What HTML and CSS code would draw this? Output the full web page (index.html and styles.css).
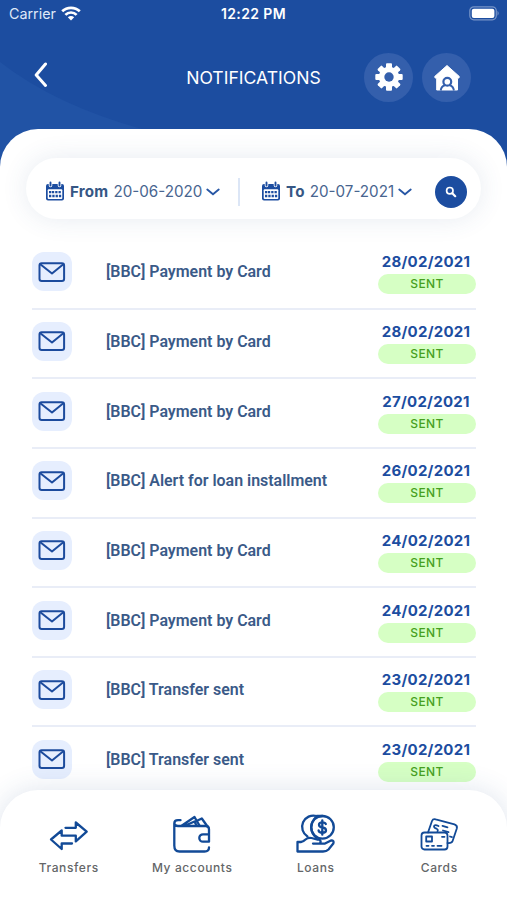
FILE: index.html
```html
<!DOCTYPE html>
<html lang="en">
<head>
    <meta charset="UTF-8">
    <meta name="viewport" content="width=device-width, initial-scale=1.0">
    <title>Notifications</title>
    <link rel="stylesheet" href="styles.css">
</head>
<body>
    <!-- Shared icons -->
    <svg class="sprite" width="0" height="0">
        <symbol id="mail" viewBox="0 0 28 22">
            <rect x="1.5" y="2.3" width="24.6" height="17.6" rx="2.2"/>
            <path d="M2.3 3.3L14 12.5L25.3 3.3"/>
        </symbol>
        <symbol id="calendar" viewBox="0 0 18 20">
            <path fill="#1c4da0" d="M2 3h14a2 2 0 0 1 2 2v12.500a2 2 0 0 1-2 2H2a2 2 0 0 1-2-2V5a2 2 0 0 1 2-2z"/>
            <rect x="1.700" y="8.300" width="14.600" height="9.600" rx="1" fill="#fff"/>
            <path stroke="#fff" stroke-width="3.600" stroke-linecap="round" d="M4.500 2.200v2.200M13.500 2.200v2.200"/>
            <path stroke="#1c4da0" stroke-width="1.900" stroke-linecap="round" d="M4.500 1.500v3M13.500 1.500v3"/>
            <path stroke="#1c4da0" stroke-width="2.300" stroke-dasharray="2.300 1" d="M5.900 11.100h8.900M3 15h8.900"/>
            <path stroke="#1c4da0" stroke-width="2.300" stroke-dasharray="2.300 1" d="M3 11.100h2.300M12.900 15h2.300"/>
        </symbol>
        <symbol id="chevron" viewBox="0 0 14 8">
            <path d="M1.300 1.500L7 6.200L12.700 1.500"/>
        </symbol>
    </svg>

    <div class="screen">
        <header class="header">
            <svg class="header-curve" viewBox="0 0 507 170" width="507" height="170">
                <path d="M0 62Q55 105 145 130L145 170H0z" fill="#2153a5"/>
            </svg>
            <div class="status-bar">
                <div class="carrier">
                    <span>Carrier</span>
                    <svg width="20" height="15" viewBox="0 0 20 15" fill="none" stroke="#fff" stroke-width="2.700">
                        <path d="M1.200 5.300C6 .6 14 .6 18.800 5.300"/>
                        <path d="M4.400 8.900C7.500 5.700 12.500 5.700 15.600 8.900"/>
                        <path d="M10 14.500L6.800 11.300Q10 8.700 13.200 11.300z" fill="#fff" stroke="none"/>
                    </svg>
                </div>
                <span class="time">12:22 PM</span>
                <svg class="battery" width="31" height="15" viewBox="0 0 31 15">
                    <rect x=".8" y=".8" width="26.500" height="13" rx="4" fill="none" stroke="#7794c7" stroke-width="1.200"/>
                    <rect x="2.800" y="2.700" width="22.600" height="9.200" rx="2" fill="#fff"/>
                    <path d="M28.500 4.800q2.400 2.500 0 5z" fill="#7794c7"/>
                </svg>
            </div>
            <div class="title-bar">
                <svg class="back" width="14" height="26" viewBox="0 0 14 26">
                    <path d="M11.500 2L2.200 13L11.500 23.500" fill="none" stroke="#fff" stroke-width="3" stroke-linecap="round" stroke-linejoin="round"/>
                </svg>
                <h1>NOTIFICATIONS</h1>
                <div class="actions">
                    <button class="round-btn" aria-label="Settings">
                        <svg width="28" height="28" viewBox="-14 -14 28 28">
                            <g fill="#fff">
                                <rect x="-3" y="-13.700" width="6" height="27.400" rx="1"/>
                                <rect x="-3" y="-13.700" width="6" height="27.400" rx="1" transform="rotate(45)"/>
                                <rect x="-3" y="-13.700" width="6" height="27.400" rx="1" transform="rotate(90)"/>
                                <rect x="-3" y="-13.700" width="6" height="27.400" rx="1" transform="rotate(135)"/>
                                <circle r="10.200"/>
                            </g>
                            <circle r="4.700" fill="#345fac"/>
                        </svg>
                    </button>
                    <button class="round-btn" aria-label="Home">
                        <svg width="28" height="28" viewBox="0 0 28 28">
                            <path d="M14 2.500L26.300 13.500Q26.500 15.500 24.500 15.300V27H3.700V15.300Q1.500 15.500 1.700 13.500z" fill="#fff" stroke="#fff" stroke-linejoin="round"/>
                            <path d="M7.700 27.500Q8.300 23 12 22.300M20.900 27.500Q20.300 23 16.600 22.300" fill="none" stroke="#345fac" stroke-width="1.900"/>
                            <circle cx="14.300" cy="18.800" r="3.900" fill="#fff" stroke="#345fac" stroke-width="2.200"/>
                        </svg>
                    </button>
                </div>
            </div>
        </header>

        <main class="panel">
            <div class="filter">
                <div class="date-field from">
                    <svg class="calendar"><use href="#calendar"/></svg>
                    <b>From</b>
                    <span>20-06-2020</span>
                    <svg class="chevron"><use href="#chevron"/></svg>
                </div>
                <div class="date-field to">
                    <svg class="calendar"><use href="#calendar"/></svg>
                    <b>To</b>
                    <span>20-07-2021</span>
                    <svg class="chevron"><use href="#chevron"/></svg>
                </div>
                <button class="search-btn" aria-label="Search">
                    <svg width="12" height="12" viewBox="0 0 12 12" fill="none" stroke="#fff" stroke-width="1.700">
                        <circle cx="4.800" cy="4.700" r="3.200"/>
                        <path d="M7.300 7.300L10.200 10.200" stroke-width="2.200" stroke-linecap="round"/>
                    </svg>
                </button>
            </div>

            <ul class="list">
                <li class="item">
                    <div class="item-icon"><svg><use href="#mail"/></svg></div>
                    <p class="item-title">[BBC] Payment by Card</p>
                    <div class="item-info"><span class="date">28/02/2021</span><span class="tag">SENT</span></div>
                </li>
                <li class="item">
                    <div class="item-icon"><svg><use href="#mail"/></svg></div>
                    <p class="item-title">[BBC] Payment by Card</p>
                    <div class="item-info"><span class="date">28/02/2021</span><span class="tag">SENT</span></div>
                </li>
                <li class="item">
                    <div class="item-icon"><svg><use href="#mail"/></svg></div>
                    <p class="item-title">[BBC] Payment by Card</p>
                    <div class="item-info"><span class="date">27/02/2021</span><span class="tag">SENT</span></div>
                </li>
                <li class="item">
                    <div class="item-icon"><svg><use href="#mail"/></svg></div>
                    <p class="item-title">[BBC] Alert for loan installment</p>
                    <div class="item-info"><span class="date">26/02/2021</span><span class="tag">SENT</span></div>
                </li>
                <li class="item">
                    <div class="item-icon"><svg><use href="#mail"/></svg></div>
                    <p class="item-title">[BBC] Payment by Card</p>
                    <div class="item-info"><span class="date">24/02/2021</span><span class="tag">SENT</span></div>
                </li>
                <li class="item">
                    <div class="item-icon"><svg><use href="#mail"/></svg></div>
                    <p class="item-title">[BBC] Payment by Card</p>
                    <div class="item-info"><span class="date">24/02/2021</span><span class="tag">SENT</span></div>
                </li>
                <li class="item">
                    <div class="item-icon"><svg><use href="#mail"/></svg></div>
                    <p class="item-title">[BBC] Transfer sent</p>
                    <div class="item-info"><span class="date">23/02/2021</span><span class="tag">SENT</span></div>
                </li>
                <li class="item">
                    <div class="item-icon"><svg><use href="#mail"/></svg></div>
                    <p class="item-title">[BBC] Transfer sent</p>
                    <div class="item-info"><span class="date">23/02/2021</span><span class="tag">SENT</span></div>
                </li>
            </ul>
        </main>

        <nav class="nav">
            <a class="nav-item">
                <svg width="40" height="40" viewBox="0 0 40 40">
                    <path d="M16.500 14.800H26.800V9.500L37.700 18.700L26.800 28.400V22.700H12.700V17.500L2 26.500L12.700 36V30.500H23"/>
                </svg>
                <span>Transfers</span>
            </a>
            <a class="nav-item">
                <svg width="40" height="40" viewBox="0 0 40 40">
                    <path d="M2.300 10V32.500Q2.300 38.500 7.500 38.500H32.500Q37 38.500 37 34.500M8.500 7.200H6Q2.300 7.200 2.300 10.500Q2.600 13 6 13H34Q37 13 37 16.500V28.700H31A3.700 3.700 0 0 1 31 21.300H37"/>
                    <path d="M10 12.500L22.500 4L27.500 12.500M24.500 8L29.800 5.500L35.500 13.500M13.500 12.500L22.500 8.500L24.500 12.500"/>
                </svg>
                <span>My accounts</span>
            </a>
            <a class="nav-item">
                <svg width="40" height="40" viewBox="0 0 40 40">
                    <circle cx="26.500" cy="14.300" r="11.300"/>
                    <path d="M26.500 3H20.500A11.300 11.300 0 0 0 11.500 23.500M20.500 3.500Q15.500 8 15.200 14.300Q15.500 21 20.500 25"/>
                    <path d="M29.800 11Q29.300 9.300 26.300 9.300Q23 9.300 23 11.700Q23 14 26.300 14.400Q30 14.900 30 17.400Q30 19.700 26.300 19.700Q23 19.700 22.600 17.500M26.300 7.300V21.700"/>
                    <path d="M1.500 38.500V29H5Q7 29 9.500 26.500Q12 24.200 15.500 25L21 26.500H23.300Q26 28.800 23.300 30.600H17M23.300 30.600H29L35 27.500Q38.500 27.300 37.300 30.500L32.500 36.500Q30.500 38.500 27 38.500H1.500"/>
                </svg>
                <span>Loans</span>
            </a>
            <a class="nav-item">
                <svg class="thin" width="40" height="40" viewBox="0 0 40 40">
                    <rect x="2.500" y="19.500" width="26" height="17" rx="3"/>
                    <path d="M9 19.500L13 8Q14 5.500 16.700 6.300L35.500 11.300Q38.700 12.500 37.800 15.500L33.600 28Q32.700 30.500 28.500 30"/>
                    <rect x="7.200" y="23.500" width="5.800" height="5"/>
                    <path d="M7.500 32.800H9.500M13 32.800H15M18.500 32.800H22.500M23 23.800H25.500"/>
                    <path d="M23.500 12.800L28.500 14.300M31 23.500L33 24.100M24 17.500L29.500 19.200M19.500 13Q15.500 11 15 13.300Q15 15 17.500 15.700Q19.500 16.700 18.500 18.200"/>
                </svg>
                <span>Cards</span>
            </a>
        </nav>
    </div>
</body>
</html>
```
FILE: styles.css
```css
* {
    box-sizing: border-box;
}

body {
    margin: 0;
    font-family: Inter, Arial, sans-serif;
    background-color: #fff;
}

h1, p, ul {
    margin: 0;
    padding: 0;
}

button {
    border: none;
    padding: 0;
    display: flex;
    align-items: center;
    justify-content: center;
}

.sprite {
    position: absolute;
}

.screen {
    width: 507px;
    height: 900px;
    display: flex;
    flex-direction: column;
    overflow: hidden;
}

/* Header */
.header {
    position: relative;
    flex: none;
    height: 170px;
    background-color: #1c4da0;
    color: #fff;
}

.header-curve {
    position: absolute;
    top: 0;
    left: 0;
}

.status-bar {
    position: relative;
    display: grid;
    grid-template-columns: 1fr auto 1fr;
    align-items: center;
    height: 27px;
    padding: 0 7px 0 9px;
    font-size: 14.3px;
}

.carrier {
    display: flex;
    align-items: center;
    gap: 5px;
    color: #dfe8f8;
}

.time {
    margin-right: 2px;
    font-size: 14px;
    font-weight: 600;
    letter-spacing: 0.4px;
}

.battery {
    justify-self: end;
}

.title-bar {
    position: relative;
    display: grid;
    grid-template-columns: 1fr auto 1fr;
    align-items: center;
    height: 50px;
    margin-top: 25px;
    padding: 0 36px 0 34px;
}

.title-bar h1 {
    margin-left: 2px;
    font-size: 17.6px;
    font-weight: 400;
}

.back {
    margin-top: -4px;
}

.actions {
    display: flex;
    justify-content: flex-end;
    gap: 9px;
}

.round-btn {
    width: 49px;
    height: 49px;
    border-radius: 50%;
    background-color: #345fac;
}

/* Panel */
.panel {
    position: relative;
    flex: 1;
    min-height: 0;
    margin-top: -41px;
    padding: 29px 26px 0;
    border-radius: 38px 38px 0 0;
    background-color: #fff;
    overflow: hidden;
}

.filter {
    display: flex;
    align-items: center;
    height: 61px;
    padding: 6px 14px 0 20px;
    border-radius: 31px;
    box-shadow: 0 0 26px rgba(60, 90, 140, 0.12);
    font-size: 15.2px;
    color: #48658f;
}

.date-field {
    display: flex;
    align-items: center;
    white-space: nowrap;
}

.date-field b {
    margin: 0 5px 0 6px;
    font-weight: 700;
    letter-spacing: 0.2px;
    color: #365785;
}

.from {
    width: 194px;
    height: 28px;
    border-right: 2px solid #dce6f6;
}

.to {
    flex: 1;
    padding-left: 22px;
}

.calendar {
    width: 18px;
    height: 20px;
    margin-top: -1px;
}

.chevron {
    width: 14px;
    height: 8px;
    margin-left: 4px;
    fill: none;
    stroke: #2857a5;
    stroke-width: 1.9;
    stroke-linecap: round;
}

.search-btn {
    width: 32px;
    height: 32px;
    border-radius: 50%;
    background-color: #1c4da0;
}

/* Notifications list */
.list {
    margin-top: 21px;
    padding: 0 5px 0 6px;
    list-style: none;
}

.item {
    display: flex;
    align-items: center;
    height: 69.65px;
    padding-bottom: 4px;
    border-bottom: 2px solid #e9edf7;
}

.item-icon {
    display: flex;
    align-items: center;
    justify-content: center;
    width: 40px;
    height: 39px;
    border-radius: 12px;
    background-color: #e6eefe;
}

.item-icon svg {
    width: 28px;
    height: 22px;
    fill: none;
    stroke: #1c4b9d;
    stroke-width: 2;
    stroke-linejoin: round;
}

.item-title {
    flex: 1;
    margin-left: 34px;
    font-family: Roboto, Arial, sans-serif;
    font-size: 15.95px;
    font-weight: 600;
    color: #3a5a88;
}

.item-info {
    width: 98px;
    padding-top: 3px;
    text-align: center;
}

.date {
    display: block;
    padding-right: 2px;
    line-height: 20px;
    font-size: 15px;
    font-weight: 700;
    letter-spacing: 0.25px;
    color: #1c4da0;
}

.tag {
    display: block;
    height: 20px;
    margin-top: 2px;
    border-radius: 10px;
    line-height: 20px;
    font-size: 12px;
    font-weight: 500;
    letter-spacing: 0.4px;
    color: #46a01e;
    background-color: #d6ffc4;
}

/* Bottom navigation */
.nav {
    position: relative;
    flex: none;
    display: grid;
    grid-template-columns: repeat(4, 1fr);
    height: 110px;
    padding: 23px 6px 0 7px;
    border-radius: 38px 38px 0 0;
    background-color: #fff;
    box-shadow: 0 0 28px rgba(50, 85, 140, 0.16);
}

.nav-item {
    display: flex;
    flex-direction: column;
    align-items: center;
    gap: 7px;
    font-size: 12px;
    font-weight: 500;
    letter-spacing: 0.6px;
    line-height: 16px;
    color: #646668;
}

.nav-item svg {
    fill: none;
    stroke: #124a97;
    stroke-width: 2.3;
    stroke-linecap: round;
    stroke-linejoin: round;
}

.nav-item .thin {
    stroke-width: 1.8;
}
```
